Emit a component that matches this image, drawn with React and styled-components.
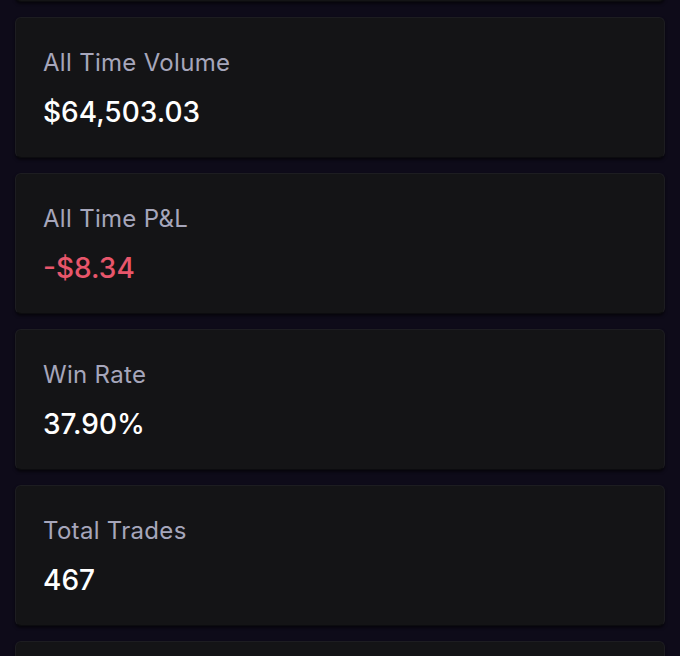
import styled, { createGlobalStyle } from 'styled-components';

const Global = createGlobalStyle`
    html, body {
        margin: 0;
        padding: 0;
        background-color: #0e0b19;
    }
`;

const stats = [
    { label: 'All Time Volume', value: '$64,503.03' },
    { label: 'All Time P&L', value: '-$8.34', negative: true },
    { label: 'Win Rate', value: '37.90%' },
    { label: 'Total Trades', value: '467' },
];

export default function App() {
    return (
        <Page>
            <Global />
            <List>
                {/* cards scrolled past, only their edges show */}
                <Card />
                {stats.map(s => (
                    <Card key={s.label}>
                        <Label>{s.label}</Label>
                        <Value $negative={s.negative}>{s.value}</Value>
                    </Card>
                ))}
                <Card />
            </List>
        </Page>
    );
}

const Page = styled.div`
    width: 100%;
    height: 656px;
    overflow: hidden;
    background-color: #0e0b19;
    font-family: Inter, "Noto Sans", sans-serif;
`;

const List = styled.div`
    display: flex;
    flex-direction: column;
    gap: 15px;
    padding: 0 15px;
    margin-top: -139px;
`;

const Card = styled.div`
    box-sizing: border-box;
    flex-shrink: 0;
    height: 141px;
    padding: 30px 27px 0 27px;
    background-color: #141416;
    border: 1px solid #1d1d21;
    border-bottom-color: #0c0c0f;
    border-radius: 6px;
    box-shadow: 0 2px 3px rgba(0, 0, 0, 0.55);
    display: flex;
    flex-direction: column;
`;

const Label = styled.p`
    margin: 0;
    font-size: 24px;
    font-weight: 400;
    letter-spacing: 0.3px;
    color: #a6a6bb;
    line-height: 30px;
`;

const Value = styled.p`
    margin: 17px 0 0 0;
    font-size: 28px;
    font-weight: 500;
    line-height: 34px;
    color: ${p => p.$negative ? '#e8566b' : '#ffffff'};
`;
